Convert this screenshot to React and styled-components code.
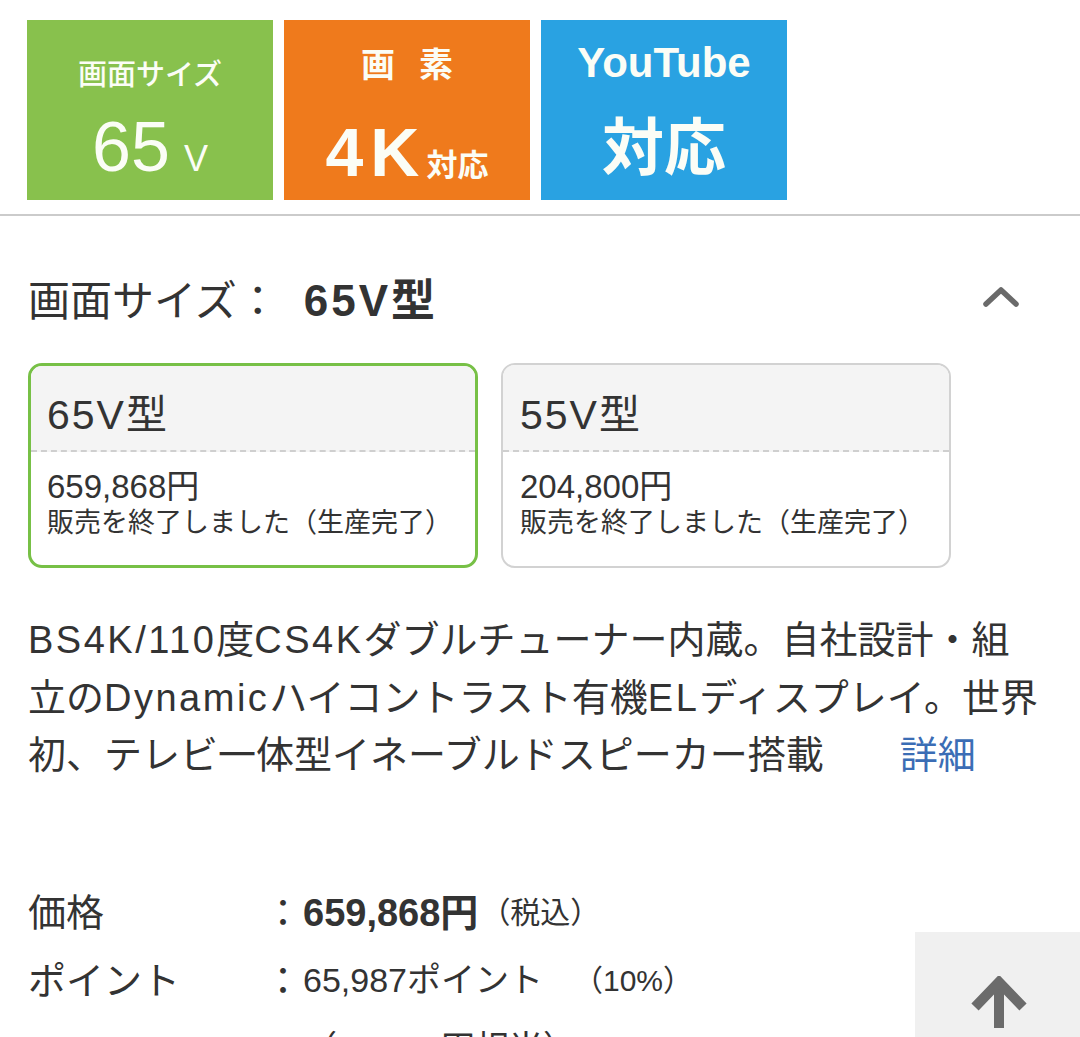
import React from "react";
import styled, { createGlobalStyle } from "styled-components";

const SANS = `"Liberation Sans", "Noto Sans CJK JP", sans-serif`;

const GlobalStyle = createGlobalStyle`
  html, body {
    margin: 0;
    padding: 0;
    background: #fff;
  }
  body {
    font-family: ${SANS};
    color: #333;
  }
  * {
    box-sizing: border-box;
  }
`;

const Page = styled.div`
  width: 1080px;
  height: 1037px;
  overflow: hidden;
  position: relative;
`;

/* ---- spec badges ---- */
const BadgeRow = styled.div`
  display: flex;
  gap: 11px;
  padding: 20px 27px 14px;
  border-bottom: 2px solid #cbcbcb;
`;

const Badge = styled.div`
  width: 246px;
  height: 180px;
  background: ${(p) => p.$bg};
  color: #fbfdf6;
  display: flex;
  flex-direction: column;
  align-items: center;
  padding-top: ${(p) => p.$pt}px;
  gap: ${(p) => p.$gap}px;
  font-family: ${SANS};
`;

const BadgeLabel = styled.div`
  font-size: ${(p) => p.$size}px;
  line-height: ${(p) => p.$size}px;
  font-weight: ${(p) => (p.$bold ? 700 : 500)};
  letter-spacing: ${(p) => p.$ls || 0}px;
  padding-left: ${(p) => p.$ls || 0}px;
  white-space: nowrap;
`;

const BadgeMain = styled.div`
  display: flex;
  align-items: baseline;
  white-space: nowrap;
  line-height: 1;
`;

const BadgeBig = styled.span`
  font-size: ${(p) => p.$size}px;
  font-weight: ${(p) => (p.$bold ? 700 : 400)};
  letter-spacing: ${(p) => p.$ls || 0}px;
`;

const BadgeSmall = styled.span`
  font-size: ${(p) => p.$size}px;
  font-weight: ${(p) => (p.$bold ? 700 : 400)};
  margin-left: ${(p) => p.$ml || 0}px;
`;

/* ---- size selector ---- */
const Section = styled.section`
  padding: 0 28px;
`;

const HeadingRow = styled.div`
  display: flex;
  align-items: center;
  justify-content: space-between;
  margin-top: 61px;
  height: 48px;
`;

const Heading = styled.h2`
  margin: 0;
  font-size: 42px;
  line-height: 48px;
  font-weight: 400;
  color: #333;
`;

const HeadingValue = styled.span`
  font-weight: 700;
  font-size: 44px;
  letter-spacing: 3px;
  margin-left: 25px;
`;

const Toggle = styled.button`
  border: none;
  background: none;
  padding: 0 0 8px;
  margin-right: 30px;
  display: flex;
`;

const Cards = styled.div`
  display: grid;
  grid-template-columns: 450px 450px;
  gap: 23px;
  margin-top: 38px;
`;

const Card = styled.div`
  height: 205px;
  border-radius: 14px;
  overflow: hidden;
  border: ${(p) => (p.$selected ? "3px solid #77c046" : "2px solid #d2d2d2")};
  background: #fff;
  display: flex;
  flex-direction: column;
`;

const CardHead = styled.div`
  height: ${(p) => (p.$selected ? 86 : 87)}px;
  background: #f4f4f4;
  border-bottom: 2px dashed #cfcfcf;
  padding: 6px 0 0 ${(p) => (p.$selected ? 16 : 17)}px;
  display: flex;
  align-items: center;
  font-size: 41px;
  letter-spacing: 2px;
  color: #333;
`;

const CardBody = styled.div`
  padding: 17px 0 0 ${(p) => (p.$selected ? 16 : 17)}px;
`;

const CardPrice = styled.div`
  font-size: 33px;
  line-height: 36px;
`;

const CardNote = styled.div`
  font-size: 27px;
  line-height: 36px;
  white-space: nowrap;
`;

const Desc = styled.p`
  margin: 44px 0 0;
  font-size: 38px;
  line-height: 57.5px;
  color: #333;
  white-space: nowrap;
`;

const Latin = styled.span`
  letter-spacing: 2.5px;
`;

const More = styled.a`
  color: #3b6db5;
  margin-left: 76px;
  text-decoration: none;
`;

/* ---- price table ---- */
const Specs = styled.dl`
  margin: 91px 0 0;
  display: grid;
  grid-template-columns: 236px 1fr;
  grid-auto-rows: 68px;
  font-size: 38px;
  color: #333;
`;

const Term = styled.dt`
  display: flex;
  align-items: center;
`;

const Value = styled.dd`
  margin: 0;
  display: flex;
  align-items: center;
  white-space: nowrap;
  font-size: 34px;
`;

const Colon = styled.span`
  width: 39px;
  font-size: 38px;
`;

const Strong = styled.strong`
  font-weight: 700;
  font-size: 38px;
`;

const Sub = styled.span`
  font-size: ${(p) => p.$size}px;
  margin-left: ${(p) => p.$ml || 0}px;
`;

const ToTop = styled.button`
  position: fixed;
  right: 0;
  bottom: 0;
  width: 165px;
  height: 105px;
  border: none;
  background: #f0f0f0;
  display: flex;
  justify-content: center;
  align-items: flex-start;
  padding: 44px 0 0 2px;
`;

const ChevronUp = () => (
  <svg width="40" height="24" viewBox="0 0 40 24">
    <polyline
      points="4,19 19,5 34,19"
      fill="none"
      stroke="#6a6a6a"
      strokeWidth="5.5"
      strokeLinecap="round"
      strokeLinejoin="round"
    />
  </svg>
);

const ArrowUp = () => (
  <svg width="60" height="52" viewBox="0 0 60 52">
    <g fill="none" stroke="#6b6b6b" strokeWidth="10">
      <line x1="30" y1="6" x2="30" y2="52" />
      <polyline points="6,31 30,6 54,31" strokeLinejoin="miter" />
    </g>
  </svg>
);

const sizes = [
  { name: "65V型", price: "659,868円", selected: true },
  { name: "55V型", price: "204,800円", selected: false },
];

export default function App() {
  return (
    <Page>
      <GlobalStyle />
      <BadgeRow>
        <Badge $bg="#88c14d" $pt={41} $gap={22}>
          <BadgeLabel $size={29}>画面サイズ</BadgeLabel>
          <BadgeMain>
            <BadgeBig $size={70}>65</BadgeBig>
            <BadgeSmall $size={36} $ml={14}>V</BadgeSmall>
          </BadgeMain>
        </Badge>
        <Badge $bg="#ef7a1c" $pt={28} $gap={36}>
          <BadgeLabel $size={34} $bold $ls={24}>画素</BadgeLabel>
          <BadgeMain>
            <BadgeBig $size={68} $bold $ls={7}>4K</BadgeBig>
            <BadgeSmall $size={31} $bold>対応</BadgeSmall>
          </BadgeMain>
        </Badge>
        <Badge $bg="#29a2e2" $pt={22} $gap={34}>
          <BadgeLabel $size={42} $bold>YouTube</BadgeLabel>
          <BadgeMain>
            <BadgeBig $size={62} $bold>対応</BadgeBig>
          </BadgeMain>
        </Badge>
      </BadgeRow>

      <Section>
        <HeadingRow>
          <Heading>
            画面サイズ：<HeadingValue>65V型</HeadingValue>
          </Heading>
          <Toggle aria-label="閉じる">
            <ChevronUp />
          </Toggle>
        </HeadingRow>

        <Cards>
          {sizes.map((s) => (
            <Card key={s.name} $selected={s.selected}>
              <CardHead $selected={s.selected}>{s.name}</CardHead>
              <CardBody $selected={s.selected}>
                <CardPrice>{s.price}</CardPrice>
                <CardNote>販売を終了しました（生産完了）</CardNote>
              </CardBody>
            </Card>
          ))}
        </Cards>

        <Desc>
          <Latin>BS4K/110</Latin>度<Latin>CS4K</Latin>ダブルチューナー内蔵。自社設計・組
          <br />
          立の<Latin>Dynamic</Latin>ハイコントラスト有機<Latin>EL</Latin>ディスプレイ。世界
          <br />
          初、テレビ一体型イネーブルドスピーカー搭載
          <More href="#">詳細</More>
        </Desc>

        <Specs>
          <Term>価格</Term>
          <Value>
            <Colon>：</Colon>
            <Strong>659,868円</Strong>
            <Sub $size={30} $ml={2}>（税込）</Sub>
          </Value>
          <Term>ポイント</Term>
          <Value>
            <Colon>：</Colon>
            65,987ポイント
            <Sub $size={30} $ml={30}>（10%）</Sub>
          </Value>
          <Term />
          <Value>
            <Sub $size={34} $ml={39}>（65,987円相当）</Sub>
          </Value>
        </Specs>
      </Section>

      <ToTop aria-label="ページトップへ">
        <ArrowUp />
      </ToTop>
    </Page>
  );
}
